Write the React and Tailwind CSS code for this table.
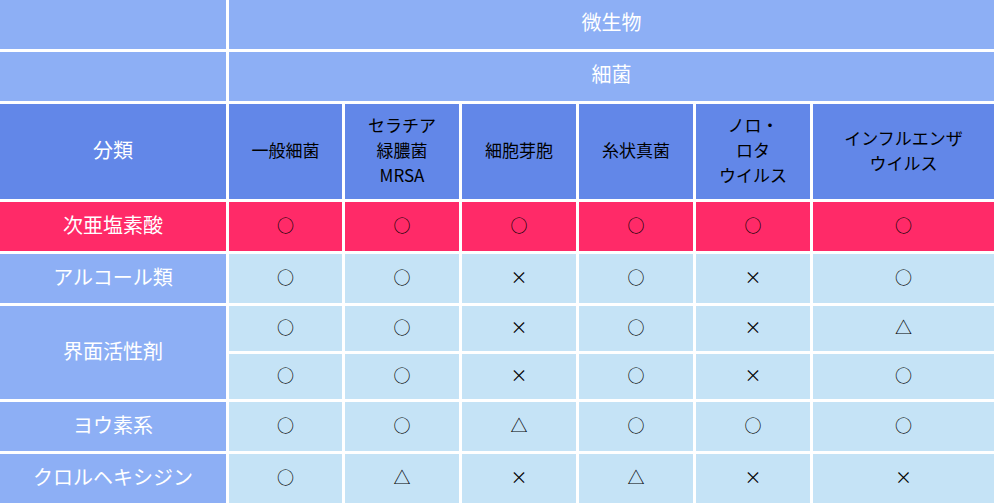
import React from 'react';

const cols = ['一般細菌', 'セラチア\n緑膿菌\nMRSA', '細胞芽胞', '糸状真菌', 'ノロ・\nロタ\nウイルス', 'インフルエンザ\nウイルス'];

const rows = [
  { name: '次亜塩素酸', vals: ['○', '○', '○', '○', '○', '○'], red: true },
  { name: 'アルコール類', vals: ['○', '○', '×', '○', '×', '○'] },
  { name: '界面活性剤', vals: ['○', '○', '×', '○', '×', '△'], span: true },
  { name: null, vals: ['○', '○', '×', '○', '×', '○'] },
  { name: 'ヨウ素系', vals: ['○', '○', '△', '○', '○', '○'] },
  { name: 'クロルヘキシジン', vals: ['○', '△', '×', '△', '×', '×'] },
];

export default function App() {
  return (
    <div
      className="w-[994px] h-[503px] overflow-hidden bg-white grid gap-[3px] grid-cols-[226px_113px_114px_114px_114px_114px_1fr] grid-rows-[49px_49px_95px_49px_49px_45px_45px_49px_49px]"
      style={{ fontFamily: '"Noto Sans CJK JP", "Noto Sans", sans-serif' }}
    >
      {/* 上段ヘッダー */}
      <div className="bg-[#8daff5]" />
      <div className="col-span-6 bg-[#8daff5] flex items-center justify-center pb-[5px] text-white text-[20px]">微生物</div>
      <div className="bg-[#8daff5]" />
      <div className="col-span-6 bg-[#8daff5] flex items-center justify-center pb-[5px] text-white text-[20px]">細菌</div>

      {/* 分類 */}
      <div className="bg-[#6287e8] flex items-center justify-center pb-[4px] text-white text-[20px]">分類</div>
      {cols.map((c) => (
        <div key={c} className="bg-[#6287e8] flex items-center justify-center pb-[4px] text-center text-black text-[17px] leading-[25px] whitespace-pre-line">
          {c}
        </div>
      ))}

      {/* 本体 */}
      {rows.map((r, i) => (
        <React.Fragment key={i}>
          {r.name && (
            <div
              className={`flex items-center justify-center pb-[4px] text-white text-[20px] ${r.red ? 'bg-[#ff2a68]' : 'bg-[#8daff5]'} ${r.span ? 'row-span-2' : ''}`}
            >
              {r.name}
            </div>
          )}
          {r.vals.map((v, j) => (
            <div
              key={j}
              className={`flex items-center justify-center pb-[4px] text-black text-[17px] ${r.red ? 'bg-[#ff2a68]' : 'bg-[#c5e3f6]'}`}
            >
              {v}
            </div>
          ))}
        </React.Fragment>
      ))}
    </div>
  );
}
